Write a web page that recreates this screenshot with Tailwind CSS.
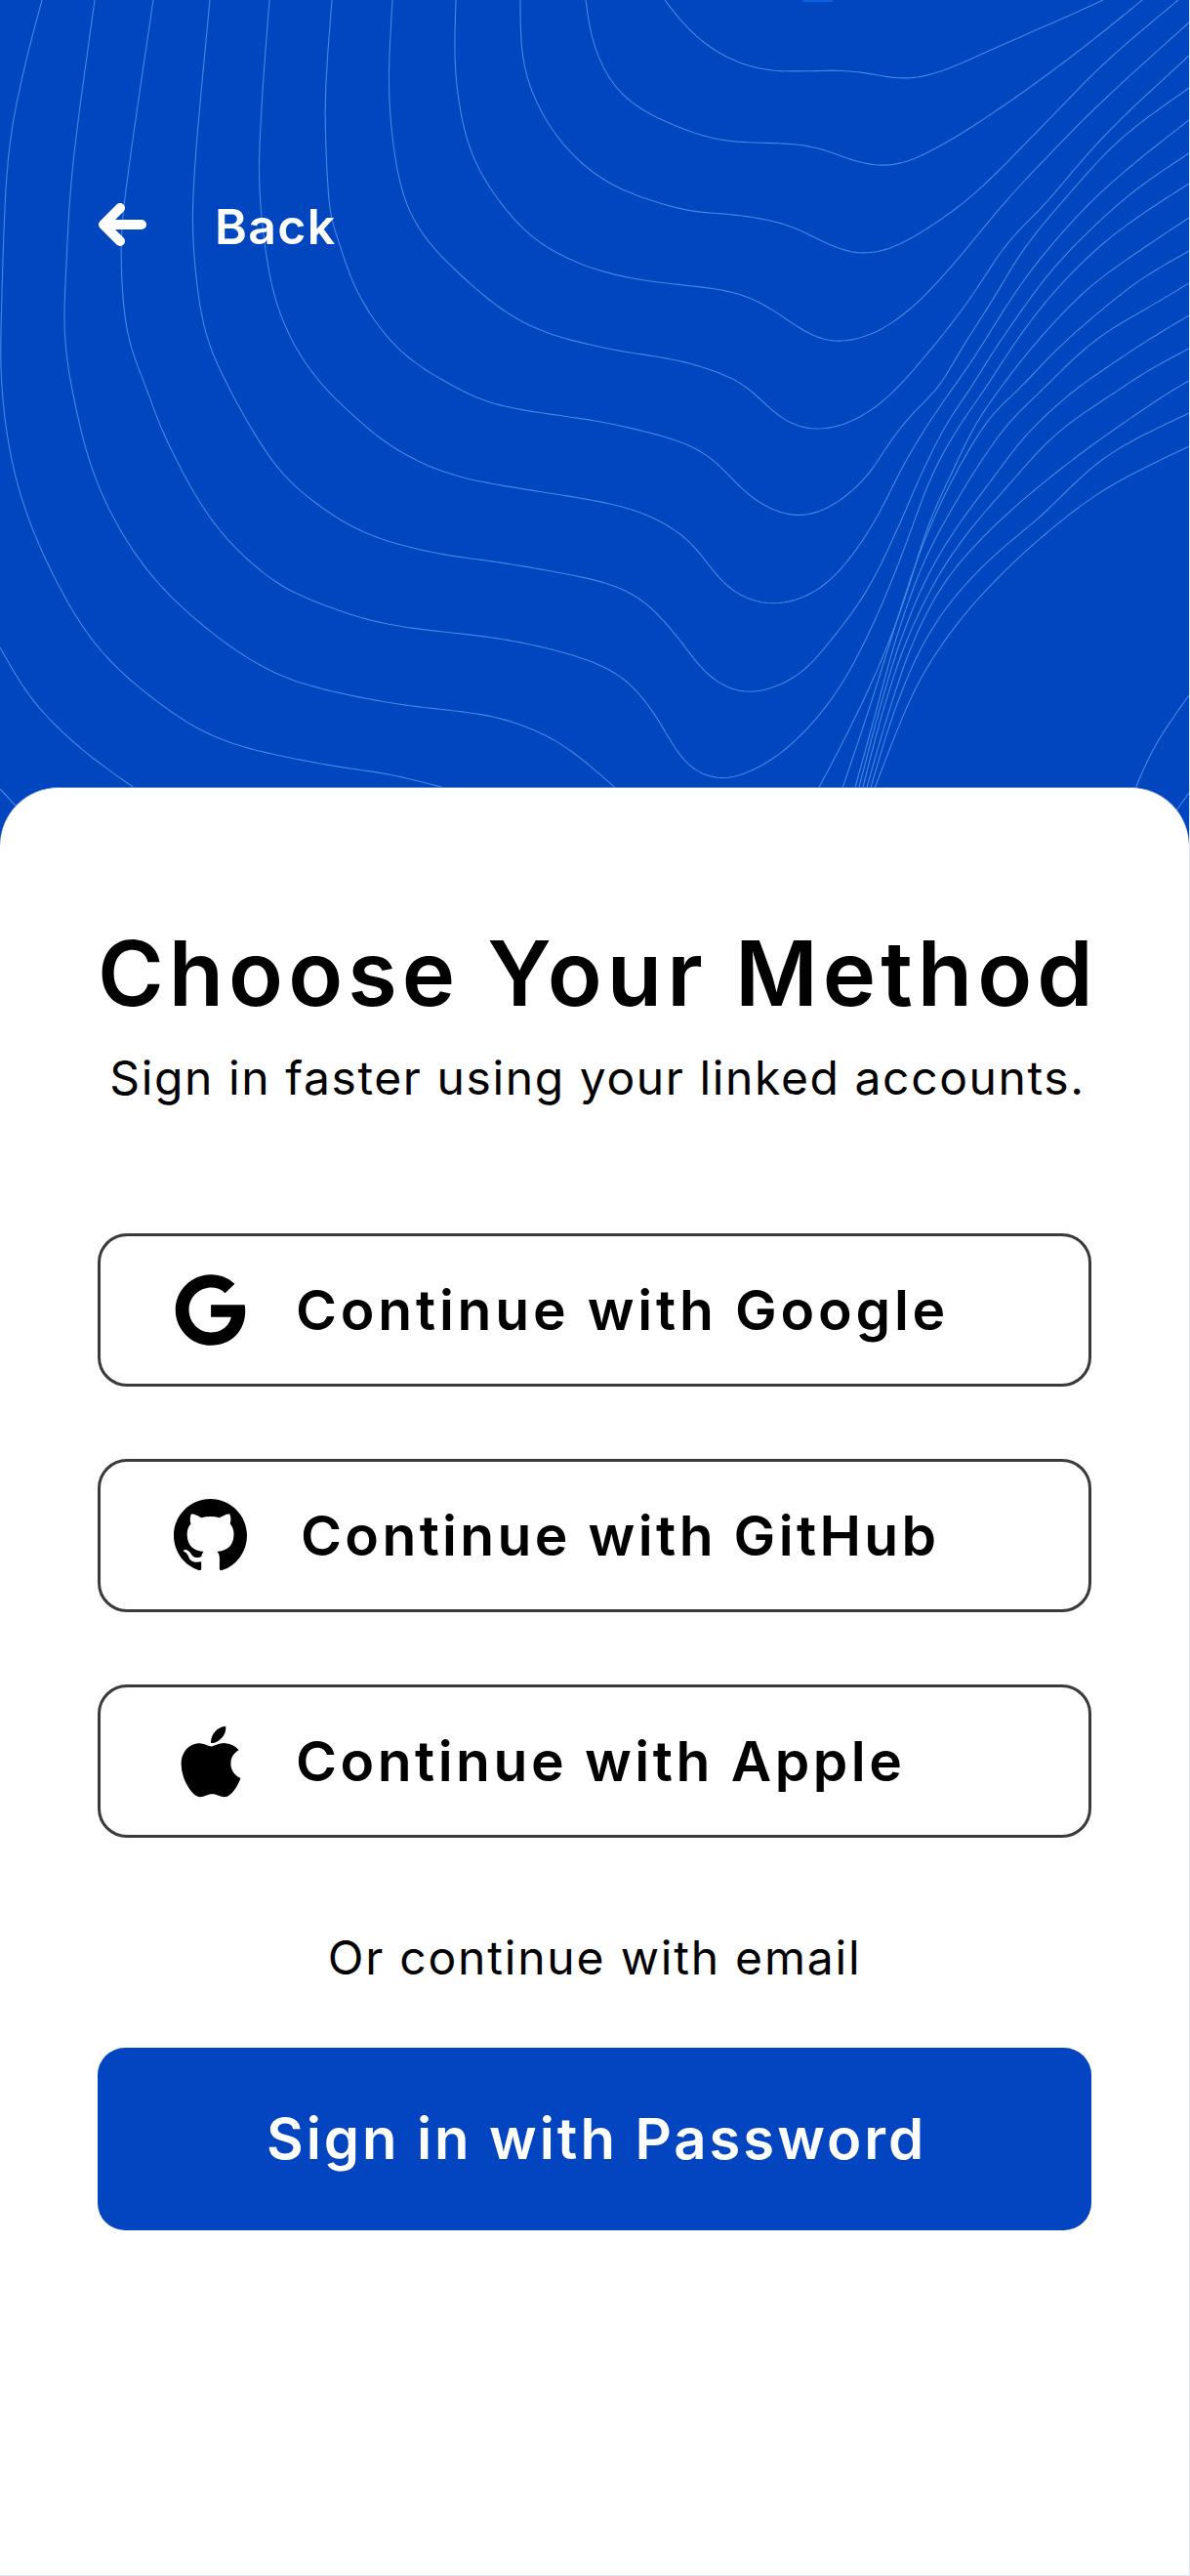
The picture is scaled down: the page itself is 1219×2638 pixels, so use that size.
<!DOCTYPE html>
<html lang="en">

<head>
    <meta charset="UTF-8">
    <meta name="viewport" content="width=device-width, initial-scale=1.0">
    <title>Choose Your Method</title>
    <script src="https://cdn.jsdelivr.net/npm/@tailwindcss/browser@4"></script>
</head>

<body class="bg-[#dce7f5] font-['Inter',sans-serif] text-black">
    <div class="w-[1218px] h-[2637px] bg-white overflow-hidden">

        <!-- hero -->
        <div class="relative h-[870px] bg-[#0246bf] pt-[202px] pl-[100px]">
            <svg class="absolute inset-0" width="1218" height="870" viewBox="0 0 1218 870">
                <rect x="822" y="0" width="31" height="2" rx="1" fill="#0a62e2"></rect>
                <g id="contours" class="fill-none stroke-[#4f8fe8] opacity-90" stroke-width="1.1"></g>
            </svg>
            <div class="relative flex items-center gap-[70px] text-white">
                <svg class="w-[50px] h-[44px] -mt-[4px]" viewBox="0 0 50 44" fill="none" stroke="currentColor" stroke-width="10" stroke-linecap="round" stroke-linejoin="round">
                    <path d="M45 22H6M23 5 6 22l17 17"></path>
                </svg>
                <span class="text-[50px] leading-[60px] font-semibold tracking-[1.3px]">Back</span>
            </div>
        </div>

        <!-- card -->
        <div class="relative -mt-[64px] h-[1831px] bg-white rounded-t-[60px] border-t border-[#6f96e0] px-[100px] pt-[140px]">
            <h1 class="text-center text-[92px] leading-[100px] font-semibold tracking-[5px] whitespace-nowrap">Choose Your Method</h1>
            <p class="mt-[27px] pl-[6px] text-center text-[48px] leading-[60px] tracking-[1.6px] whitespace-nowrap">Sign in faster using your linked accounts.</p>

            <div class="mt-[129px] flex flex-col gap-[74px]">
                <button class="h-[157px] flex items-center pl-[75px] border-[3px] border-[#3a3a3a] rounded-[30px] text-[57px] font-semibold tracking-[3.8px]">
                    <svg class="w-[75px] h-[75px]" viewBox="0 0 488 512" fill="currentColor">
                        <path d="M488 261.8C488 403.3 391.1 504 248 504 110.8 504 0 393.2 0 256S110.8 8 248 8c66.8 0 123 24.5 166.3 64.9l-67.5 64.9C258.5 52.6 94.3 116.6 94.3 256c0 86.5 69.1 156.6 153.7 156.6 98.2 0 135-70.4 140.8-106.9H248v-85.3h236.1c2.3 12.7 3.9 24.9 3.9 41.4z"></path>
                    </svg>
                    <span class="ml-[50px]">Continue with Google</span>
                </button>
                <button class="h-[157px] flex items-center pl-[75px] border-[3px] border-[#3a3a3a] rounded-[30px] text-[57px] font-semibold tracking-[3.35px]">
                    <svg class="w-[75px] h-[75px]" viewBox="0 0 16 16" fill="currentColor">
                        <path d="M8 0C3.58 0 0 3.58 0 8c0 3.54 2.29 6.53 5.47 7.59.4.07.55-.17.55-.38 0-.19-.01-.82-.01-1.49-2.01.37-2.53-.49-2.69-.94-.09-.23-.48-.94-.82-1.13-.28-.15-.68-.52-.01-.53.63-.01 1.08.58 1.23.82.72 1.21 1.87.87 2.33.66.07-.52.28-.87.51-1.07-1.78-.2-3.64-.89-3.64-3.95 0-.87.31-1.59.82-2.15-.08-.2-.36-1.02.08-2.12 0 0 .67-.21 2.2.82.64-.18 1.32-.27 2-.27.68 0 1.36.09 2 .27 1.53-1.04 2.2-.82 2.2-.82.44 1.1.16 1.92.08 2.12.51.56.82 1.27.82 2.15 0 3.07-1.87 3.75-3.65 3.95.29.25.54.73.54 1.48 0 1.07-.01 1.93-.01 2.2 0 .21.15.46.55.38A8.013 8.013 0 0016 8c0-4.42-3.58-8-8-8z"></path>
                    </svg>
                    <span class="ml-[55px]">Continue with GitHub</span>
                </button>
                <button class="h-[157px] flex items-center pl-[75px] border-[3px] border-[#3a3a3a] rounded-[30px] text-[57px] font-semibold tracking-[3.5px]">
                    <span class="w-[75px] flex justify-center">
                        <svg class="w-[62px] h-[74px]" viewBox="0 28 384 456" fill="currentColor">
                            <path d="M318.7 268.7c-.2-36.7 16.4-64.4 50-84.8-18.8-26.9-47.2-41.7-84.7-44.6-35.5-2.8-74.3 20.7-88.5 20.7-15 0-49.4-19.7-76.4-19.7C63.3 141.2 4 184.8 4 273.5q0 39.3 14.4 81.2c12.8 36.7 59 126.7 107.2 125.2 25.2-.6 43-17.9 75.8-17.9 31.8 0 48.3 17.9 76.4 17.9 48.6-.7 90.4-82.5 102.6-119.3-65.2-30.7-61.7-90-61.7-91.9zm-56.6-164.2c27.3-32.4 24.8-61.9 24-72.5-24.1 1.4-52 16.4-67.9 34.9-17.5 19.8-27.8 44.3-25.6 71.9 26.1 2 49.9-11.4 69.5-34.3z"></path>
                        </svg>
                    </span>
                    <span class="ml-[50px]">Continue with Apple</span>
                </button>
            </div>

            <p class="mt-[93px] text-center text-[48px] leading-[60px] tracking-[1.8px]">Or continue with email</p>
            <button class="mt-[62px] w-full h-[187px] pl-[4px] bg-[#0344c0] rounded-[28px] text-white text-[58px] font-semibold tracking-[2.95px]">Sign in with Password</button>
        </div>
    </div>

    <script>
        // contour lines of the hero, traced from the picture
        const lines = [
            [[681,0],[700,25],[733,53],[777,71],[823,73],[873,72],[907,79],[930,81],[963,74],[1033,43],[1093,17],[1130,0]],
            [[600,0],[604,30],[611,55],[630,90],[661,115],[700,132],[733,143],[767,146],[810,147],[843,152],[873,165],[907,171],[933,165],[983,138],[1050,93],[1117,43],[1170,0]],
            [[533,0],[537,71],[568,137],[622,187],[700,215],[733,218],[777,223],[813,232],[843,248],[867,258],[883,261],[913,255],[953,232],[1000,197],[1067,130],[1133,63],[1207,0]],
            [[467,0],[467,82],[486,165],[537,236],[591,269],[646,285],[700,292],[743,297],[777,308],[807,328],[833,345],[860,351],[900,340],[940,310],[977,270],[1033,203],[1083,150],[1133,100],[1218,23]],
            [[402,0],[399,110],[420,219],[482,291],[545,335],[622,357],[700,370],[757,390],[775,405],[793,423],[813,437],[837,441],[867,435],[893,420],[917,400],[960,350],[993,307],[1033,247],[1067,213],[1133,137],[1218,57]],
            [[340,0],[333,110],[338,219],[345,240],[366,300],[410,360],[473,400],[519,417],[622,433],[700,453],[730,470],[750,490],[773,513],[815,530],[850,520],[887,490],[913,450],[940,417],[960,400],[983,360],[1017,307],[1050,253],[1100,193],[1150,140],[1218,90]],
            [[276,0],[268,110],[266,200],[280,300],[305,360],[335,400],[367,430],[393,452],[433,475],[473,489],[519,498],[622,515],[665,528],[700,548],[720,570],[740,597],[763,613],[793,620],[833,608],[867,577],[900,527],[927,473],[960,420],[978,395],[1000,363],[1033,310],[1067,263],[1117,207],[1167,163],[1218,123]],
            [[215,0],[200,165],[198,250],[210,340],[236,400],[260,443],[287,483],[320,513],[367,543],[417,560],[467,570],[519,577],[622,597],[665,620],[700,660],[720,687],[740,703],[770,711],[817,693],[850,657],[887,607],[917,547],[943,487],[970,433],[993,400],[1013,367],[1047,317],[1083,270],[1133,220],[1173,187],[1218,157]],
            [[157,0],[133,165],[124,250],[130,340],[151,400],[167,443],[200,507],[233,553],[283,597],[333,620],[400,640],[519,655],[600,675],[640,695],[670,730],[700,780],[723,795],[747,799],[793,777],[833,740],[867,693],[900,627],[927,560],[953,490],[980,440],[1008,400],[1027,370],[1060,323],[1100,277],[1150,233],[1218,188]],
            [[97,0],[75,165],[68,270],[66,340],[74,400],[93,477],[123,543],[167,603],[233,660],[300,697],[400,720],[467,728],[519,737],[576,762],[634,810]],
            [[43,0],[22,82],[8,165],[2,300],[2,400],[17,493],[50,580],[100,663],[167,723],[233,760],[333,783],[400,793],[467,810]],
            [[0,663],[33,717],[83,767],[142,810]],
            [[0,808],[30,840]],
            [[837,810],[867,753],[900,683],[927,613],[950,540],[977,480],[1000,433],[1023,400],[1043,373],[1077,333],[1117,293],[1167,257],[1218,223]],
            [[862,810],[890,727],[912,657],[937,580],[960,523],[987,470],[1017,423],[1043,400],[1077,363],[1117,327],[1167,287],[1218,257]],
            [[875,810],[897,730],[917,657],[943,583],[970,530],[1000,480],[1033,433],[1067,400],[1100,367],[1133,340],[1173,317],[1218,290]],
            [[879,810],[900,730],[922,657],[950,590],[980,540],[1017,490],[1053,443],[1100,400],[1133,377],[1173,350],[1218,323]],
            [[883,810],[903,733],[927,660],[957,597],[990,547],[1033,497],[1083,443],[1145,400],[1180,377],[1218,357]],
            [[887,810],[907,740],[933,663],[963,603],[1000,557],[1050,510],[1117,457],[1200,400],[1218,390]],
            [[891,810],[913,737],[940,670],[973,617],[1017,570],[1067,528],[1133,467],[1218,423]],
            [[895,810],[913,763],[940,700],[977,643],[1017,597],[1067,550],[1133,500],[1218,457]],
            [[1162,810],[1183,763],[1218,712]],
            [[1205,830],[1218,812]]
        ];

        // sample the point list as a spline, about one point per 6px
        function sample(pts) {
            const out = [pts[0]];
            for (let i = 0; i < pts.length - 1; i++) {
                const p0 = pts[i - 1] || pts[i];
                const p1 = pts[i];
                const p2 = pts[i + 1];
                const p3 = pts[i + 2] || p2;
                const steps = Math.max(1, Math.round(Math.hypot(p2[0] - p1[0], p2[1] - p1[1]) / 6));
                for (let s = 1; s <= steps; s++) {
                    const t = s / steps;
                    const f = (a, b, c, d) => 0.5 * (2 * b + (c - a) * t + (2 * a - 5 * b + 4 * c - d) * t * t + (3 * b - a - 3 * c + d) * t * t * t);
                    out.push([f(p0[0], p1[0], p2[0], p3[0]), f(p0[1], p1[1], p2[1], p3[1])]);
                }
            }
            return out;
        }

        // take the hand-traced wobble out, ends stay where they are
        function smooth(pts, passes) {
            let cur = pts;
            for (let n = 0; n < passes; n++) {
                cur = cur.map((p, i) => {
                    if (i === 0 || i === cur.length - 1) return p;
                    return [(cur[i - 1][0] + 2 * p[0] + cur[i + 1][0]) / 4, (cur[i - 1][1] + 2 * p[1] + cur[i + 1][1]) / 4];
                });
            }
            return cur;
        }

        const contours = document.getElementById('contours');
        lines.forEach(function (pts) {
            const dense = smooth(sample(pts), 16);
            const path = document.createElementNS('http://www.w3.org/2000/svg', 'path');
            path.setAttribute('d', 'M' + dense.map(p => p[0].toFixed(1) + ' ' + p[1].toFixed(1)).join('L'));
            contours.appendChild(path);
        });
    </script>
</body>

</html>
